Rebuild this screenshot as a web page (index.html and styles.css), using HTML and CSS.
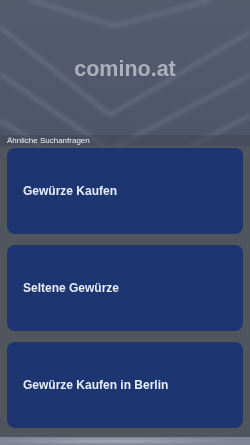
FILE: index.html
```html
<!DOCTYPE html>
<html lang="de">

<head>
    <meta charset="UTF-8" />
    <title>comino.at</title>
    <link rel="stylesheet" href="styles.css">
</head>

<body>

    <!-- Hintergrund mit Winkel-Muster -->
    <div class="backdrop">
        <svg viewBox="0 0 250 445" preserveAspectRatio="none" width="250" height="445">
            <defs>
                <linearGradient id="bg" x1="0" y1="0" x2="0" y2="1">
                    <stop offset="0" stop-color="#555c6e" />
                    <stop offset="0.3" stop-color="#4f566a" />
                    <stop offset="1" stop-color="#5d6373" />
                </linearGradient>
                <radialGradient id="glow" cx="0.45" cy="0.5" r="0.5">
                    <stop offset="0" stop-color="#a3a8b5" />
                    <stop offset="1" stop-color="#7f8596" />
                </radialGradient>
                <filter id="soft"><feGaussianBlur stdDeviation="2" /></filter>
            </defs>
            <rect width="250" height="445" fill="url(#bg)" />
            <rect y="437" width="250" height="8" fill="url(#glow)" />
            <g fill="none" stroke="#7d8497" stroke-width="3" filter="url(#soft)" opacity="0.6">
                <polyline points="30,0 115,26 210,0" />
                <polyline points="0,27 110,115 250,32" />
                <polyline points="0,74 110,150 250,75" />
                <polyline points="0,120 110,190 250,115" />
            </g>
        </svg>
    </div>

    <header class="site-head">
        <h1 class="site-name">comino.at</h1>
    </header>

    <section class="related">
        <div class="related-label">Ähnliche Suchanfragen</div>
        <div class="related-list">
            <a class="related-card" href="#">Gewürze Kaufen</a>
            <a class="related-card" href="#">Seltene Gewürze</a>
            <a class="related-card" href="#">Gewürze Kaufen in Berlin</a>
        </div>
    </section>

</body>

</html>
```

FILE: styles.css
```css
body {
    margin: 0;
    width: 250px;
    height: 445px;
    overflow: hidden;
    font-family: 'Liberation Sans', Arial, sans-serif;
    background-color: #555c6e;
}

.backdrop {
    position: fixed;
    top: 0;
    left: 0;
    z-index: -1;
    line-height: 0;
}

.site-head {
    height: 135px;
    display: flex;
    align-items: center;
    justify-content: center;
}

.site-name {
    margin: 0;
    padding-top: 3px;
    font-size: 21.5px;
    font-weight: bold;
    color: #aab0bc;
}

.related-label {
    height: 11px;
    line-height: 11px;
    padding-left: 7px;
    font-size: 8px;
    color: #f2f4f8;
    background-color: rgba(62, 67, 78, 0.45);
}

.related-list {
    display: flex;
    flex-direction: column;
    gap: 11px;
    padding: 2px 7px 9px;
    background-color: #50555e;
}

.related-card {
    height: 86px;
    display: flex;
    align-items: center;
    padding-left: 16px;
    border-radius: 8px;
    background-color: #1d3672;
    color: #e8eef8;
    font-size: 12px;
    font-weight: bold;
    text-decoration: none;
}
```
